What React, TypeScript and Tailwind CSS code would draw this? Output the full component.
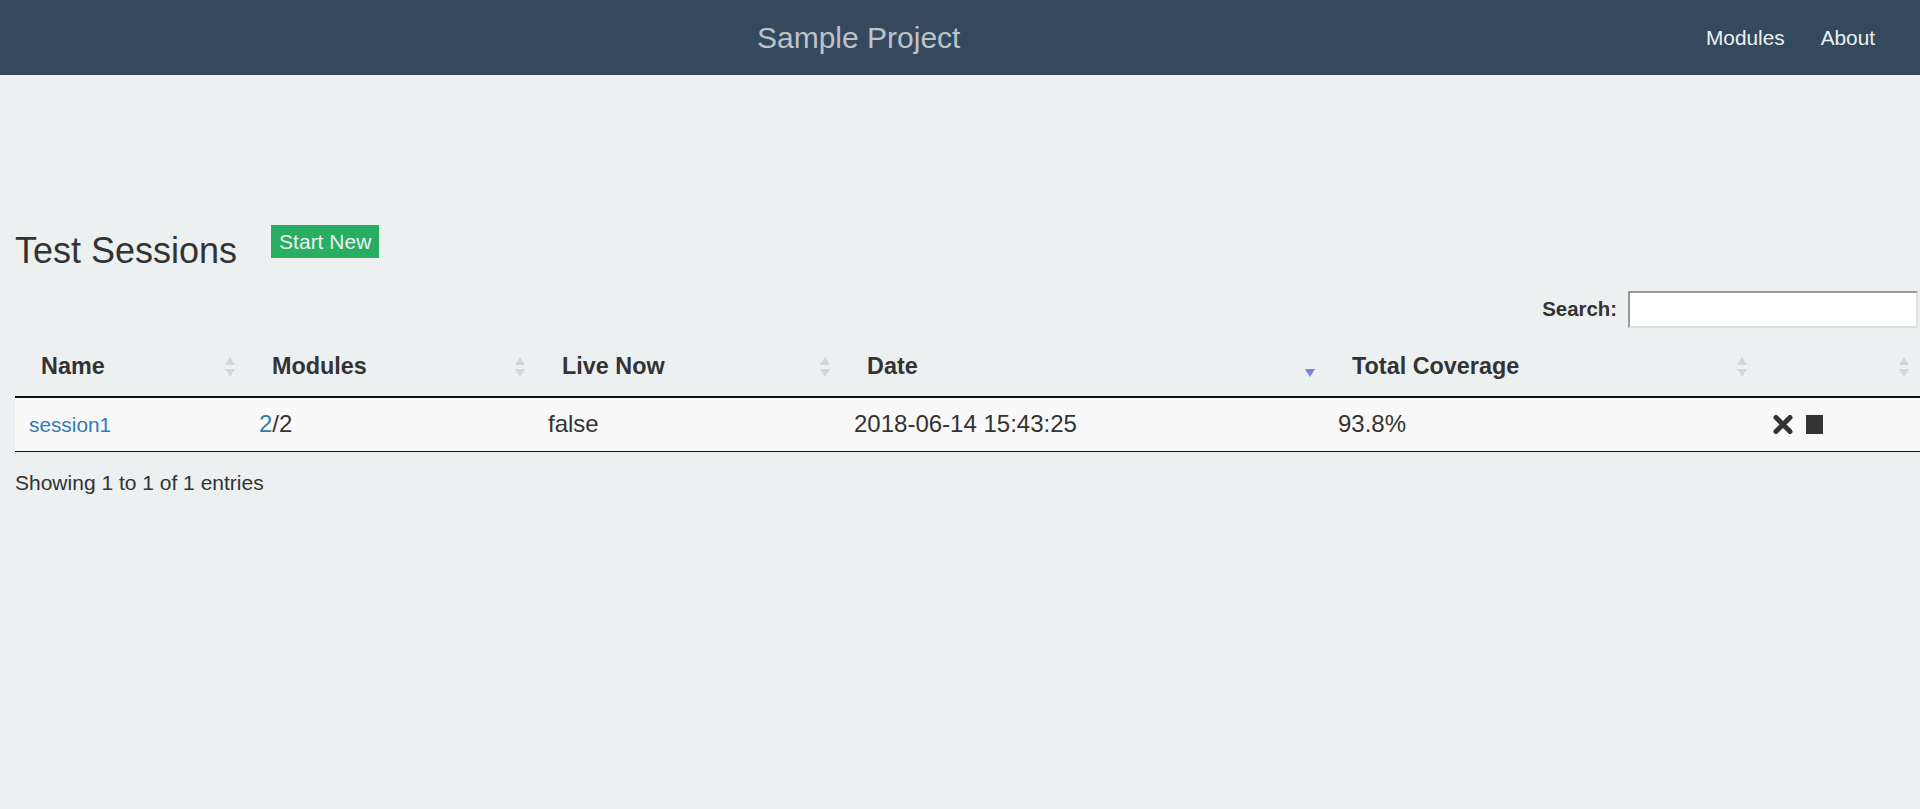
import React from "react";

const cols = [
  { label: "Name", w: "w-[231px]" },
  { label: "Modules", w: "w-[290px]" },
  { label: "Live Now", w: "w-[305px]" },
  { label: "Date", w: "w-[485px]", sorted: true },
  { label: "Total Coverage", w: "w-[432px]" },
  { label: "", w: "" },
];

function SortIcon({ active }: { active?: boolean }) {
  // datatables-style double arrow; active column shows only the blue down arrow
  return (
    <svg width="12" height="22" viewBox="0 0 12 22" className="absolute right-[10px] top-1/2 -translate-y-1/2">
      {!active && <polygon points="6,1 11,9 1,9" fill="#d3d7d9" />}
      <polygon points="1,13 11,13 6,21" fill={active ? "#7b84d9" : "#d3d7d9"} />
    </svg>
  );
}

export default function App() {
  return (
    <div className="min-h-[809px] bg-[#ecf0f1] font-['Liberation_Sans',Arial,sans-serif] text-[#333]">
      <nav className="flex h-[75px] items-center bg-[#34495e]">
        <a className="pl-[757px] text-[30px] leading-none text-[#bdc3c7]">Sample Project</a>
        <div className="ml-auto flex gap-[36px] pr-[45px] text-[20.8px] text-[#ecf0f1]">
          <a>Modules</a>
          <a>About</a>
        </div>
      </nav>

      <div className="pl-[15px]">
        <div className="flex items-start pt-[150px]">
          <h1 className="mt-[6px] text-[36px] leading-[40px]">Test Sessions</h1>
          <button className="ml-[34px] flex h-[33px] items-center bg-[#27ae60] px-[8px] text-[21px] text-[#ecf0f1]">
            Start New
          </button>
        </div>

        <div className="mt-[20px] flex items-center justify-end gap-[11px] pr-[2px]">
          <label className="text-[20.4px] font-bold">Search:</label>
          <input className="h-[37px] w-[290px] border-2 border-t-[#999] border-l-[#999] border-r-[#e0e0e0] border-b-[#e0e0e0] bg-white outline-none" />
        </div>

        <table className="mt-[10px] w-[1905px] table-fixed">
          <thead>
            <tr className="border-b-2 border-[#111]">
              {cols.map((c, i) => (
                <th
                  key={i}
                  className={`relative h-[59px] pl-[26px] text-left text-[23.4px] font-bold ${c.w}`}
                >
                  {c.label}
                  <SortIcon active={c.sorted} />
                </th>
              ))}
            </tr>
          </thead>
          <tbody>
            <tr className="h-[54px] border-b border-[#111] bg-[#f9f9f9] text-[24px]">
              <td className="pl-[14px] text-[20.8px] text-[#337ab7]">session1</td>
              <td className="pl-[13px]">
                <span className="text-[#337ab7]">2</span>/2
              </td>
              <td className="pl-[12px]">false</td>
              <td className="pl-[13px]">2018-06-14 15:43:25</td>
              <td className="pl-[12px]">93.8%</td>
              <td className="pl-[15px]">
                <div className="flex items-center gap-[13px]">
                  <svg width="20" height="19" viewBox="0 0 20 19">
                    <path d="M3 2.5 L17 16.5 M17 2.5 L3 16.5" stroke="#333" strokeWidth="5" strokeLinecap="round" />
                  </svg>
                  <div className="h-[19px] w-[17px] bg-[#333]" />
                </div>
              </td>
            </tr>
          </tbody>
        </table>

        <div className="mt-[16px] text-[21px] leading-[30px]">Showing 1 to 1 of 1 entries</div>
      </div>
    </div>
  );
}
